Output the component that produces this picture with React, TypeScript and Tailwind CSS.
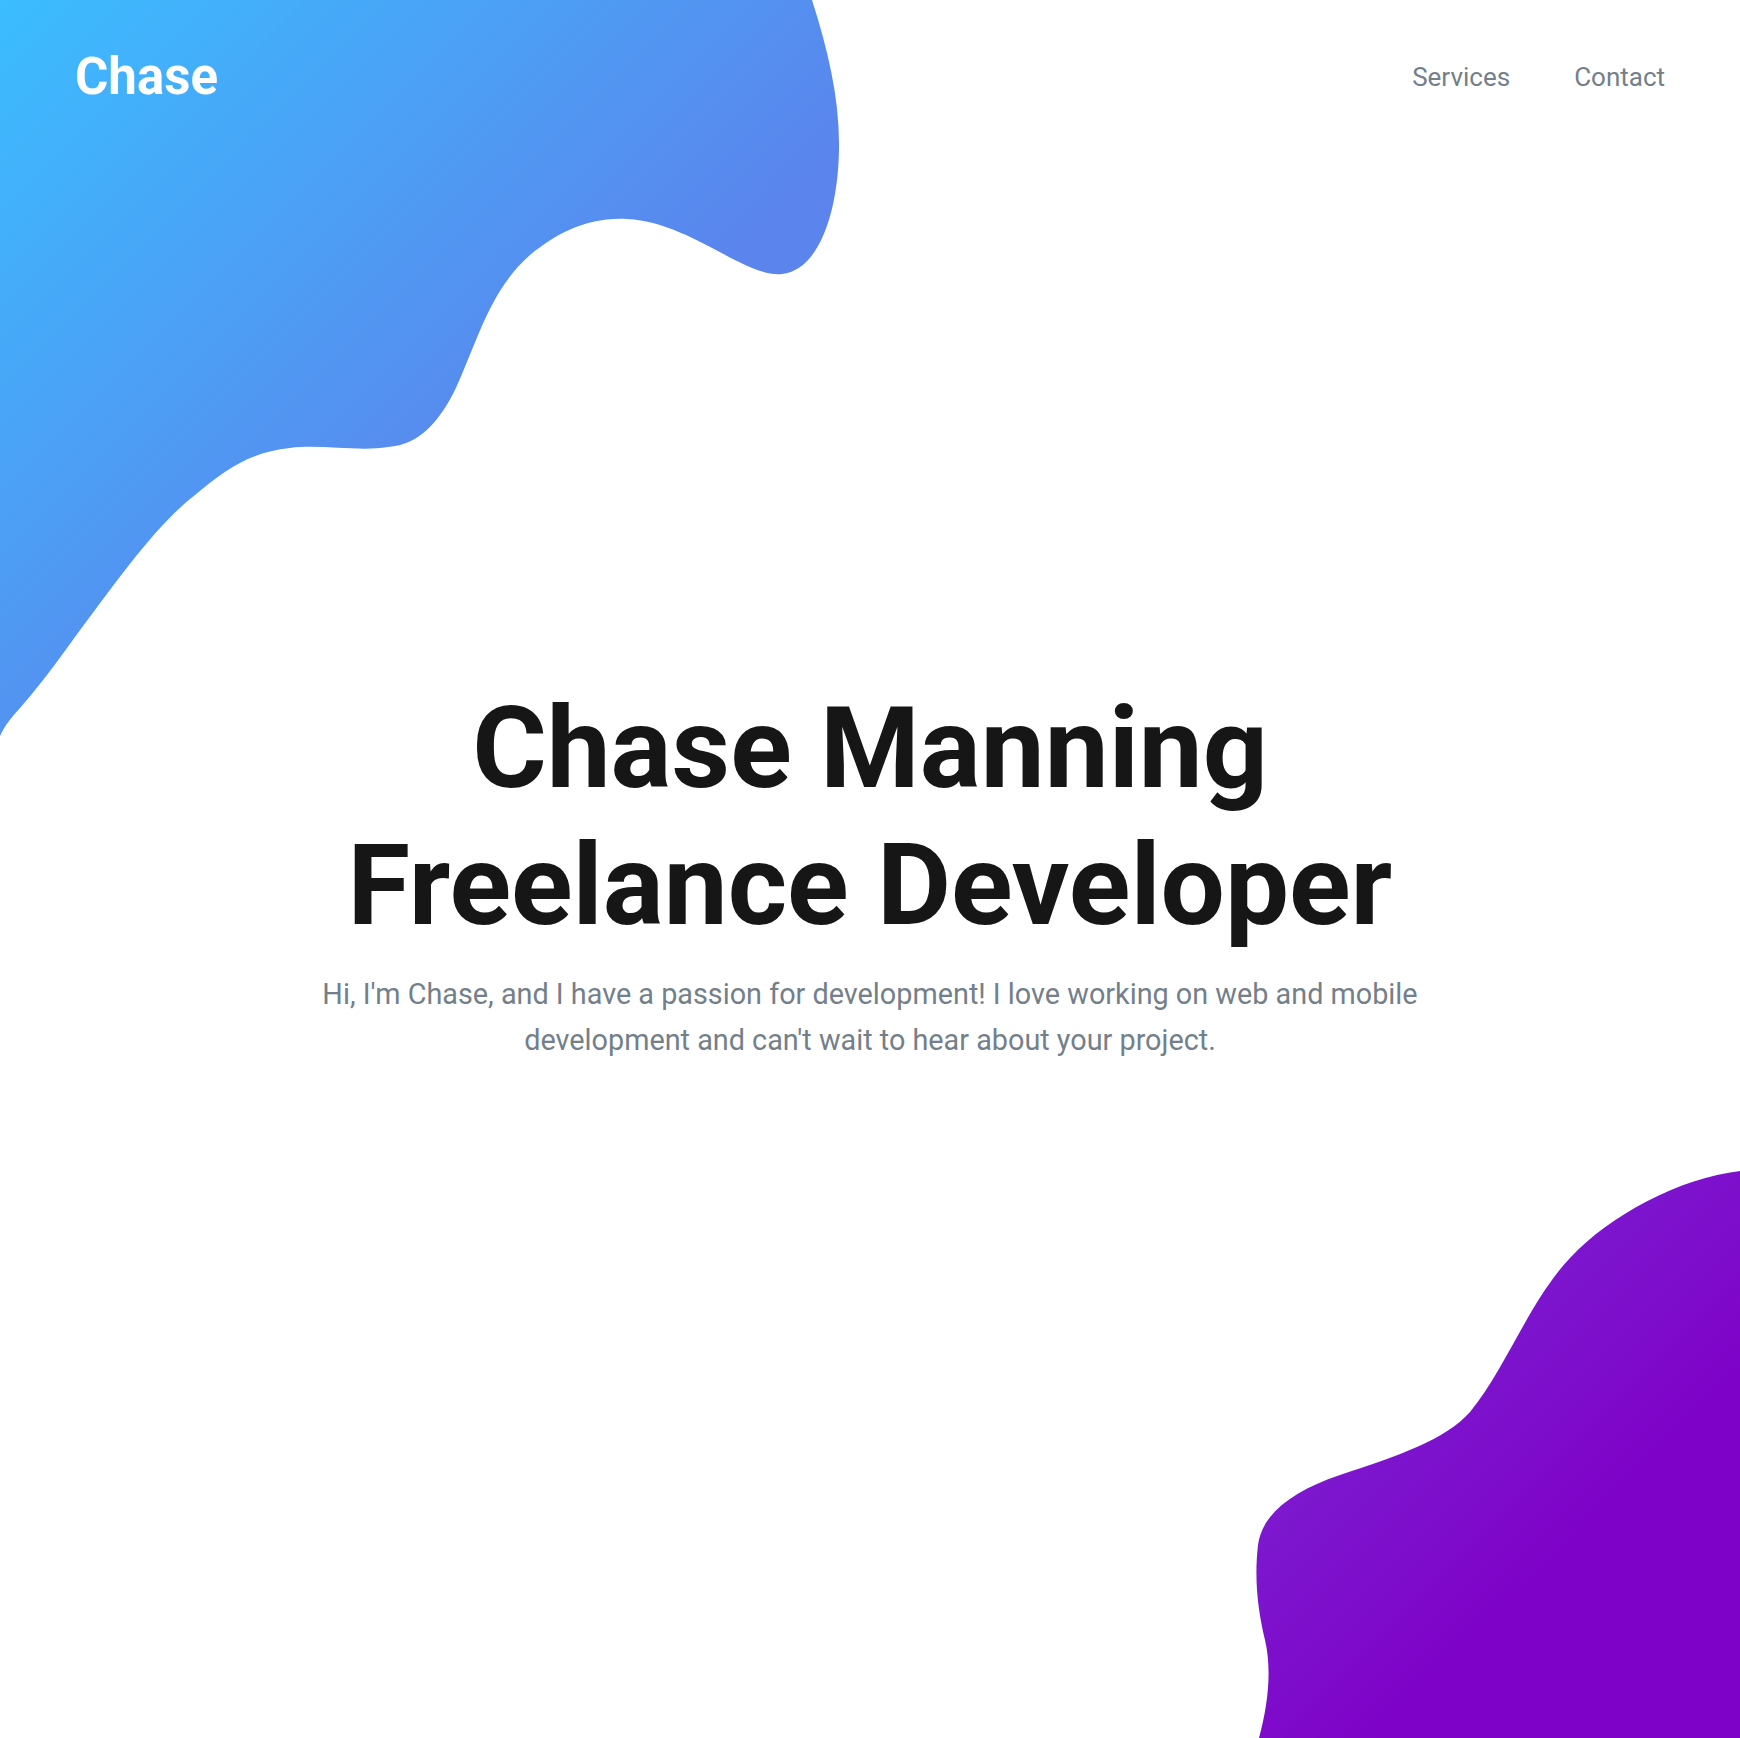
import React from "react";

function Blobs() {
  return (
    <svg
      className="pointer-events-none absolute inset-0 h-full w-full"
      viewBox="0 0 1740 1738"
      preserveAspectRatio="none"
      aria-hidden="true"
    >
      <defs>
        <linearGradient id="blueG" gradientUnits="userSpaceOnUse" x1="0" y1="0" x2="500" y2="500">
          <stop offset="0" stopColor="#3bbdff" />
          <stop offset="1" stopColor="#5b84ec" />
        </linearGradient>
        <linearGradient id="purpleG" gradientUnits="userSpaceOnUse" x1="1290" y1="1290" x2="1560" y2="1560">
          <stop offset="0" stopColor="#7a26d2" />
          <stop offset="1" stopColor="#7f02c8" />
        </linearGradient>
      </defs>
      <path
        fill="url(#blueG)"
        d="M0 0 H812 C828 50 840 100 839 150 C838 210 820 270 782 274 C745 278 690 222 627 219 C585 217 555 235 530 255 C490 290 478 340 455 390 C440 420 420 445 388 447 C360 452 320 444 290 448 C250 452 225 470 195 495 C160 522 125 570 95 610 C70 643 45 680 20 708 C10 719 4 727 0 736 Z"
      />
      <path
        fill="url(#purpleG)"
        d="M1740 1171 C1680 1178 1610 1215 1570 1258 C1530 1300 1505 1370 1470 1412 C1445 1440 1400 1455 1340 1475 C1290 1492 1262 1515 1258 1545 C1254 1580 1258 1610 1265 1640 C1272 1670 1268 1705 1259 1738 L1740 1738 Z"
      />
    </svg>
  );
}

export default function App() {
  return (
    <div
      className="relative min-h-[1738px] w-full overflow-hidden bg-white"
      style={{ fontFamily: "Roboto, 'Noto Sans', sans-serif" }}
    >
      <Blobs />
      <div className="relative">
        <header className="flex items-center justify-between px-[75px] pt-[45px]">
          <div className="text-[51px] font-bold leading-[64px] text-white">Chase</div>
          <nav className="flex items-center gap-[64px] text-[26px] leading-[32px] text-[#737f8b]">
            <a href="#">Services</a>
            <a href="#">Contact</a>
          </nav>
        </header>
        <main className="flex flex-col items-center pt-[571px] text-center">
          <h1 className="text-[114px] font-bold leading-[137px] text-[#161616]">
            Chase Manning
            <br />
            Freelance Developer
          </h1>
          <p className="mt-[17px] max-w-[1140px] text-[28.8px] leading-[46px] text-[#737f8b]">
            Hi, I'm Chase, and I have a passion for development! I love working on web and mobile
            development and can't wait to hear about your project.
          </p>
        </main>
      </div>
    </div>
  );
}
